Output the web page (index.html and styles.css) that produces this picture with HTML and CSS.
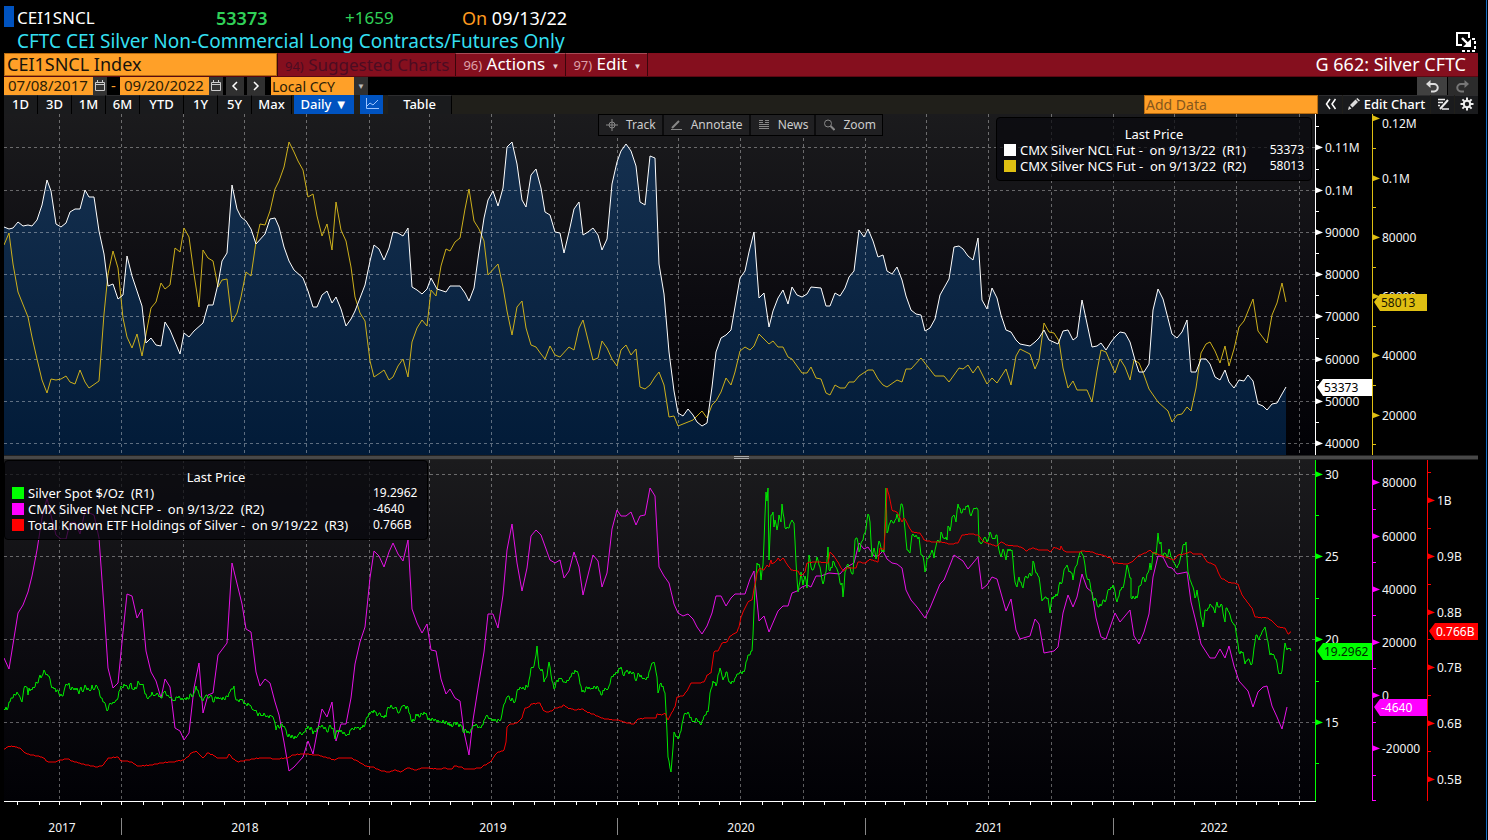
FILE: index.html
```html
<!DOCTYPE html>
<html lang="en">
<head>
<meta charset="utf-8">
<title>CEI1SNCL Index – G 662: Silver CFTC</title>
<link rel="stylesheet" href="styles.css">
</head>
<body>
<div class="terminal">
  <header class="quote">
    <div class="quote-row">
      <span class="ticker">CEI1SNCL</span>
      <span class="last">53373</span>
      <span class="change">+1659</span>
      <span class="as-of"><span class="as-of-label">On</span> 09/13/22</span>
    </div>
    <div class="quote-name">CFTC CEI Silver Non-Commercial Long Contracts/Futures Only</div>
    <button class="popout" aria-label="Pop out">
      <svg width="22" height="22" viewBox="0 0 22 22" fill="none" stroke="#fff" stroke-width="2">
        <path d="M7 14H2V2h12v5"/><path d="M7 7l7 7" stroke-width="2.4"/><path d="M16 8v8H8z" fill="#fff" stroke="none"/>
        <path d="M17 8h3v12H8v-3" stroke-dasharray="3 2"/>
      </svg>
    </button>
  </header>

  <nav class="command">
    <input class="command-input" aria-label="Security" value="CEI1SNCL Index">
    <button class="menu dim"><span class="num">94)</span> Suggested Charts</button>
    <button class="menu"><span class="num">96)</span> Actions <span class="caret">▼</span></button>
    <button class="menu"><span class="num">97)</span> Edit <span class="caret">▼</span></button>
    <h1 class="title">G 662: Silver CFTC</h1>
  </nav>

  <div class="range">
    <input class="date" aria-label="Start date" value="07/08/2017">
    <button class="cal" aria-label="Pick start date"><svg width="10" height="12" viewBox="0 0 10 12" fill="none" stroke="#ccc"><path d="M.5 2.500h9v8h-9zM.5 4.500h9M2.500 0v3M7.500 0v3"/></svg></button>
    <span class="dash">-</span>
    <input class="date" aria-label="End date" value="09/20/2022">
    <button class="cal" aria-label="Pick end date"><svg width="10" height="12" viewBox="0 0 10 12" fill="none" stroke="#ccc"><path d="M.5 2.500h9v8h-9zM.5 4.500h9M2.500 0v3M7.500 0v3"/></svg></button>
    <button class="step" aria-label="Earlier"><svg width="8" height="10" viewBox="0 0 8 10" fill="none" stroke="#fff" stroke-width="1.500"><path d="M6 1L2 5l4 4"/></svg></button>
    <button class="step" aria-label="Later"><svg width="8" height="10" viewBox="0 0 8 10" fill="none" stroke="#fff" stroke-width="1.500"><path d="M2 1l4 4-4 4"/></svg></button>
    <label class="currency">
      <select aria-label="Currency"><option>Local CCY</option></select>
      <span class="select-arrow">▼</span>
    </label>
    <div class="history">
      <button aria-label="Undo"><svg width="14" height="13" viewBox="0 0 14 13" fill="none" stroke="#ddd" stroke-width="2"><path d="M4 4h5a3.500 3.500 0 0 1 0 7.500H6"/><path d="M5.500 0v8L1 4z" fill="#ddd" stroke="none"/></svg></button>
      <button aria-label="Redo" disabled><svg width="14" height="13" viewBox="0 0 14 13" fill="none" stroke="#777" stroke-width="2"><path d="M10 4H5a3.500 3.500 0 0 0 0 7.500H8"/><path d="M8.500 0v8L13 4z" fill="#777" stroke="none"/></svg></button>
    </div>
  </div>

  <div class="tabs">
    <button class="w-s">1D</button><button class="w-s">3D</button><button class="w-s">1M</button><button class="w-s">6M</button><button class="w-l">YTD</button><button class="w-s">1Y</button><button class="w-s">5Y</button><button class="w-m">Max</button>
    <button class="active daily">Daily ▼</button>
    <button class="active line-type" aria-label="Line chart"><svg width="14" height="12" viewBox="0 0 14 12" fill="none" stroke="#9cc4ff"><path d="M1.500 0v10.500H14"/><path d="M2 8l3-3 3 2 5-5"/></svg></button>
    <button class="table-tab">Table</button>
    <div class="tabs-right">
      <input class="add-data" aria-label="Add Data" placeholder="Add Data">
      <button class="w-i" aria-label="Collapse"><svg width="12" height="12" viewBox="0 0 12 12" fill="none" stroke="#fff" stroke-width="1.500"><path d="M5 1L1.500 6 5 11M10.500 1L7 6l3.500 5"/></svg></button>
      <button class="edit-chart"><svg width="12" height="12" viewBox="0 0 12 12" fill="#ddd"><path d="M0 12l1-4 2.500 2.500zM2 7l5.500-5.500L10 4l-5.500 5.500zM8.200 1L9.400 0 12 2.500 10.800 3.500z"/></svg> Edit Chart</button>
      <button class="w-i" aria-label="Notes"><svg width="12" height="12" viewBox="0 0 12 12" fill="none" stroke="#eee"><path d="M1 1.500h7M1 4.500h5M1 7.500h2M5 11h7" stroke-width="1.500"/><path d="M3 11l8-9" stroke-width="2"/></svg></button>
      <button class="w-i" aria-label="Settings"><svg width="14" height="14" viewBox="0 0 14 14" fill="none" stroke="#eee"><circle cx="7" cy="7" r="3.200" stroke-width="2"/><path d="M7 .5v3M7 10.500v3M.5 7h3M10.500 7h3M2.400 2.400l2 2M9.600 9.600l2 2M11.600 2.400l-2 2M4.400 9.600l-2 2" stroke-width="2"/></svg></button>
    </div>
  </div>

  <main class="charts">
    <section class="panel">
      <svg id="positions" viewBox="4 114 1474 341" role="img" aria-label="Silver non-commercial long and short futures"></svg>
      <div class="tools">
        <button><svg width="12" height="12" viewBox="0 0 12 12" fill="none" stroke="#888"><circle cx="6" cy="6" r="3"/><path d="M6 0v12M0 6h12"/></svg>Track</button>
        <button><svg width="12" height="12" viewBox="0 0 12 12" fill="none" stroke="#888"><path d="M1 9l7-7" stroke-width="2"/><path d="M0 10.500h11"/></svg>Annotate</button>
        <button><svg width="12" height="12" viewBox="0 0 12 12" fill="none" stroke="#888"><path d="M1 1.500h4M1 3.500h4M7 1.500h4M7 3.500h4M1 5.500h10M1 7.500h10M1 9.500h10"/></svg>News</button>
        <button><svg width="12" height="12" viewBox="0 0 12 12" fill="none" stroke="#888"><circle cx="5" cy="4.500" r="3.500"/><path d="M7.500 7l4 4" stroke-width="2"/></svg>Zoom</button>
      </div>
      <div class="legend legend-top">
        <div class="legend-title">Last Price</div>
        <div class="legend-row"><i class="swatch white"></i><span class="legend-label">CMX Silver NCL Fut -&nbsp; on 9/13/22&nbsp; (R1)</span><span>53373</span></div>
        <div class="legend-row"><i class="swatch gold"></i><span class="legend-label">CMX Silver NCS Fut -&nbsp; on 9/13/22&nbsp; (R2)</span><span>58013</span></div>
      </div>
    </section>
    <div class="splitter"><span class="grip"></span></div>
    <section class="panel">
      <svg id="prices" viewBox="4 460 1474 380" role="img" aria-label="Silver spot, net futures position and ETF holdings"></svg>
      <div class="legend legend-bottom">
        <div class="legend-title">Last Price</div>
        <div class="legend-row"><i class="swatch green"></i><span class="legend-label">Silver Spot $/Oz&nbsp; (R1)</span><span class="legend-value">19.2962</span></div>
        <div class="legend-row"><i class="swatch magenta"></i><span class="legend-label">CMX Silver Net NCFP -&nbsp; on 9/13/22&nbsp; (R2)</span><span class="legend-value">-4640</span></div>
        <div class="legend-row"><i class="swatch red"></i><span class="legend-label">Total Known ETF Holdings of Silver -&nbsp; on 9/19/22&nbsp; (R3)</span><span class="legend-value">0.766B</span></div>
      </div>
    </section>
  </main>
</div>
<script src="chart.js"></script>
</body>
</html>
```

FILE: styles.css
```css
* { box-sizing: border-box; }
body {
  margin: 0;
  background: #000;
  color: #fff;
  font-family: "Noto Sans", "Open Sans", sans-serif;
  font-size: 13px;
}
button, input, select {
  font: inherit;
  color: inherit;
  border: 0;
  margin: 0;
  padding: 0;
  border-radius: 0;
  background: none;
}
button { white-space: nowrap; }
button svg { flex: none; }
.terminal {
  margin-right: 1px;
  padding: 6px 8px 0 4px;
  border-right: 1px solid #1a6fc4;
}

.quote {
  position: relative;
  height: 47px;
  font-size: 18px;
  line-height: 24px;
}
.quote-row {
  display: grid;
  grid-template-columns: 212px 129px 117px auto;
  height: 24px;
}
.ticker {
  height: 21px;
  padding-left: 3px;
  border-left: 10px solid #0053c0;
  font-size: 17px;
}
.last { color: #30d158; font-weight: 600; }
.change { color: #30d158; font-size: 17px; }
.as-of-label { color: #ff9a1f; }
.quote-name { padding-left: 13px; font-size: 19px; line-height: 22px; color: #34dff0; }
.popout { position: absolute; right: 1px; bottom: 0; display: flex; }

.command {
  display: flex;
  height: 24px;
  background: #850f1e;
  border-bottom: 1px solid #5a0812;
  font-size: 17px;
  line-height: 20px;
}
.command-input {
  width: 273px;
  padding: 0 2px 2px;
  border: 1px solid #b86c10;
  background: #ffa028;
  color: #17130c;
  font-size: 18px;
}
.menu {
  padding: 0 6px 0 7px;
  border-left: 1px solid #3a050b;
  border-top: 1px solid #a84a55;
}
.num { color: #dda0a8; font-size: 13px; }
.menu.dim, .dim .num { color: #4c0c22; border-top-color: #850f1e; }
.caret { margin-left: 2px; font-size: 8px; color: #e8cdd0; vertical-align: 1px; }
.title {
  flex: 1;
  margin: 0;
  padding-right: 12px;
  border-left: 1px solid #3a050b;
  font-size: 18px;
  font-weight: 400;
  line-height: 22px;
  text-align: right;
}

.range { display: flex; height: 18px; }
.date {
  width: 89px;
  padding: 0 0 2px 4px;
  background: #ffa028;
  color: #2a1c06;
  font-size: 15px;
}
.cal {
  display: flex;
  align-items: center;
  justify-content: center;
  width: 14px;
  background: #333;
}
.dash { width: 13px; text-align: center; color: #ffa028; font-size: 15px; line-height: 16px; }
.step {
  display: flex;
  align-items: center;
  justify-content: center;
  width: 18px;
  margin-left: 3px;
  background: #303030;
}
.currency { display: flex; margin-left: 6px; }
.currency select {
  width: 83px;
  appearance: none;
  padding: 0 0 2px 1px;
  background: #ffa028;
  color: #2a1c06;
  font-size: 14px;
}
.select-arrow { width: 14px; background: #303030; color: #bbb; font-size: 8px; line-height: 18px; text-align: center; }
.history { display: flex; gap: 1px; margin-left: auto; }
.history button {
  display: flex;
  align-items: center;
  justify-content: center;
  width: 30px;
  background: #404040;
}
.history button:disabled { background: #2c2c2c; }

.tabs {
  display: flex;
  height: 19px;
  background: #201f1a;
  line-height: 16px;
}
.tabs button {
  display: flex;
  align-items: center;
  justify-content: center;
  padding-bottom: 2px;
  background: #1a1b1d;
  border-right: 1px solid #000;
  border-top: 1px solid #2c2c2e;
  font-weight: 500;
}
.tabs .w-s { width: 34px; }
.tabs .w-m { width: 40px; }
.tabs .w-l { width: 44px; }
.tabs .active { background: #0053c0; border: 0; }
.tabs .daily { width: 60px; margin: 0 6px 0 2px; }
.tabs .line-type { width: 23px; margin-right: 5px; }
.tabs .table-tab { width: 64px; }
.tabs-right { display: flex; gap: 1px; margin-left: auto; }
.tabs-right button { gap: 4px; border-right: 0; }
.tabs .w-i { width: 23px; }
.tabs .edit-chart { width: 87px; }
.add-data {
  width: 174px;
  padding-left: 1px;
  border: 1px solid #b86c10;
  background: #ffa028;
  font-size: 14px;
}
.add-data::placeholder { color: #85561c; opacity: 1; }

.panel { position: relative; }
.panel > svg { display: block; width: 100%; height: auto; }
.panel text { font-size: 12px; fill: #f4f4f4; }
.splitter {
  display: flex;
  align-items: center;
  justify-content: center;
  height: 5px;
  background: #484848;
  border-top: 1px solid #222;
  border-bottom: 1px solid #222;
}
.grip { width: 15px; height: 3px; border-top: 1px solid #aaa; border-bottom: 1px solid #aaa; }
.tools {
  position: absolute;
  top: 0;
  left: 594px;
  display: flex;
  gap: 2px;
  height: 22px;
  border: 1px solid #000;
  background: #0c0c0d;
  font-size: 12px;
}
.tools button {
  display: flex;
  align-items: center;
  gap: 8px;
  padding: 0 6px 1px 7px;
  background: #202022;
  color: #ccc;
}
.legend {
  position: absolute;
  padding: 8px 7px;
  border: 1px solid #000;
  border-radius: 4px;
  background: rgba(9, 9, 14, 0.72);
  font-size: 13px;
  line-height: 16px;
}
.legend-top { top: 3px; right: 166px; width: 316px; height: 64px; }
.legend-bottom { top: 0; left: 0; width: 424px; height: 80px; }
.legend-title { text-align: center; }
.legend-row { display: flex; align-items: center; white-space: pre; }
.legend-label { flex: 1; }
.legend-value { width: 47px; }
.legend-row span:last-child { font-size: 12px; }
.swatch { width: 12px; height: 12px; margin-right: 4px; }
.white { background: #fff; }
.gold { background: #dfbf12; }
.green { background: #0f0; }
.magenta { background: #f0f; }
.red { background: #f00; }

.grid { stroke: #fff; stroke-opacity: 0.36; stroke-dasharray: 3 3; shape-rendering: crispEdges; }
.line { fill: none; stroke-width: 1; stroke-linejoin: round; }
```

FILE: chart.js
```js
const QUARTERS = [59, 121, 183, 244, 306, 369, 429, 491, 554, 617, 678, 740, 803, 865, 926, 988, 1051, 1113, 1174, 1236, 1299];
const MONTHS = [17, 39, 59, 80, 101, 121, 143, 162, 183, 202, 224, 244, 265, 287, 306, 328, 349, 369, 391, 410, 429, 450, 472, 491, 513, 534, 554, 576, 596, 617, 638, 657, 678, 699, 719, 740, 762, 782, 803, 824, 844, 865, 885, 904, 926, 947, 967, 988, 1009, 1030, 1051, 1071, 1092, 1113, 1133, 1152, 1174, 1194, 1215, 1236, 1256, 1278, 1299];

const LONGS = "4,227 9,229 13,228 18,222 23,226 28,225 32,226 37,220 42,205 47,180 51,191 56,224 61,227 66,223 70,212 75,209 80,209 85,190 89,197 94,197 99,231 104,254 108,286 113,284 118,299 123,295 127,256 132,276 142,306 146,343 151,338 156,345 161,346 165,322 170,330 180,354 184,333 189,337 194,331 203,323 208,305 213,305 218,284 222,261 227,253 232,185 237,209 241,217 246,221 251,229 256,244 265,234 270,219 275,218 279,227 284,247 289,261 294,270 303,278 308,291 313,307 317,307 322,295 327,291 332,303 336,297 341,309 346,326 351,319 355,311 365,285 370,261 374,245 379,249 384,260 389,248 393,232 398,233 403,236 408,228 412,287 417,290 422,294 427,289 431,278 437,289 446,292 450,286 460,286 465,293 469,301 474,288 479,251 484,218 488,200 493,191 498,206 503,188 507,147 512,142 517,164 522,200 526,207 531,175 536,169 541,188 545,212 550,215 555,232 560,233 564,253 569,232 574,209 579,202 583,235 588,232 593,228 598,235 602,250 607,239 612,184 617,162 621,151 626,144 631,151 636,166 640,202 645,205 650,156 655,158 659,264 664,294 669,352 674,391 678,413 683,416 688,409 693,415 697,422 702,426 707,423 712,387 716,352 721,338 726,335 731,330 736,301 740,278 745,271 749,252 754,232 759,298 764,293 769,327 773,311 778,298 783,290 788,304 792,287 797,295 802,297 807,294 811,287 821,288 826,306 830,306 835,293 840,296 845,288 849,277 854,271 859,230 864,237 868,229 873,241 878,257 883,255 887,271 892,274 897,267 902,280 906,296 911,310 916,314 921,315 925,331 930,328 935,319 940,295 949,279 954,247 959,246 963,249 968,256 973,260 978,238 982,300 987,309 992,288 997,298 1001,315 1006,330 1011,332 1016,340 1020,344 1030,346 1035,342 1039,338 1044,330 1049,340 1058,344 1063,331 1068,330 1073,340 1077,337 1082,300 1092,347 1097,346 1101,343 1106,350 1111,342 1115,337 1120,332 1125,333 1130,342 1135,360 1139,372 1144,372 1149,364 1153,310 1158,289 1163,299 1172,334 1177,338 1182,332 1187,320 1191,372 1196,372 1201,359 1206,359 1210,364 1215,377 1220,380 1225,370 1229,382 1234,388 1239,380 1244,381 1248,375 1253,381 1258,404 1263,406 1267,410 1272,404 1277,403 1282,394 1286,387";

const SHORTS = "4,245 9,233 13,264 18,292 28,317 32,337 37,359 42,380 47,393 51,379 56,380 61,379 66,376 70,382 75,384 80,370 85,382 89,388 99,381 104,314 108,274 113,251 118,268 123,318 127,337 132,348 137,334 142,356 147,329 151,308 156,302 161,283 165,289 170,285 175,248 180,252 184,228 189,237 194,274 199,307 203,250 208,258 213,261 218,287 222,280 227,279 232,322 237,313 241,297 246,272 251,276 256,242 260,224 265,225 270,211 275,189 279,181 284,167 289,142 294,152 298,161 303,170 308,197 313,194 317,216 322,236 327,224 332,250 336,202 341,230 346,241 351,267 355,297 360,313 365,321 370,361 374,377 380,373 384,370 389,380 393,377 398,366 403,359 408,377 412,342 417,328 422,320 427,326 431,290 436,296 441,266 446,249 450,251 455,242 460,238 465,209 469,189 474,221 479,229 484,241 488,275 498,264 503,287 507,311 512,335 517,307 522,301 526,328 531,345 536,347 541,354 545,359 550,346 555,355 560,357 569,347 574,350 579,328 583,320 593,360 598,358 602,341 607,348 612,359 617,366 621,350 626,345 631,355 636,349 640,387 645,389 650,385 655,377 659,372 664,385 669,417 674,416 678,426 693,420 702,411 707,418 712,405 716,401 721,392 726,378 731,385 735,372 740,351 745,347 750,350 754,346 759,334 769,344 773,341 778,347 783,347 788,357 792,359 802,373 807,373 811,367 816,378 821,379 826,393 830,395 835,385 840,388 845,388 849,382 854,382 859,376 868,370 873,370 878,379 883,385 887,387 897,380 902,382 906,369 911,369 921,358 935,376 944,376 949,382 959,368 963,369 968,365 973,373 978,366 987,384 992,378 997,383 1006,369 1011,385 1016,356 1020,349 1030,354 1035,369 1039,360 1044,323 1049,332 1054,333 1059,341 1063,368 1068,388 1073,381 1077,390 1087,390 1092,402 1097,371 1101,350 1106,352 1115,373 1120,359 1125,367 1130,380 1134,360 1139,363 1144,375 1149,389 1158,402 1168,411 1172,422 1177,415 1182,414 1187,407 1191,411 1196,388 1201,353 1206,344 1210,342 1215,351 1220,363 1225,346 1229,366 1234,349 1239,327 1244,321 1253,299 1258,331 1267,343 1272,315 1277,303 1282,283 1286,302";

const NET = "4,658 9,669 18,613 23,605 28,592 32,576 37,550 42,518 47,498 51,515 56,535 61,539 66,539 70,523 75,522 80,534 85,511 94,515 99,538 104,608 108,668 113,688 118,683 123,632 127,594 132,596 137,618 142,609 146,651 151,672 156,681 161,698 165,679 170,687 175,728 180,731 184,740 189,733 194,688 199,663 203,713 208,695 213,693 218,655 227,643 232,563 242,604 246,629 251,632 256,672 260,686 265,679 270,683 275,702 279,715 284,742 289,771 294,767 303,757 308,741 313,754 317,733 322,709 327,717 332,702 336,741 341,724 346,724 351,698 355,664 360,642 365,627 370,578 374,551 379,556 384,567 389,552 393,543 398,554 403,561 408,540 412,609 417,623 422,633 427,624 431,650 436,651 441,679 446,694 450,689 455,698 460,701 464,732 469,755 473,720 479,682 484,652 488,614 493,614 498,628 503,595 507,550 512,524 517,563 522,591 527,568 531,536 536,530 541,535 550,560 555,563 560,560 564,578 569,571 574,552 579,567 583,595 588,575 593,555 598,561 602,587 607,573 612,529 617,510 621,516 626,516 631,512 636,525 640,516 645,515 650,488 655,496 659,567 664,576 669,583 674,604 678,613 683,616 688,614 693,619 697,627 702,634 707,626 712,613 716,596 721,596 726,606 731,598 735,594 745,594 750,579 754,571 759,621 764,616 769,632 778,611 783,606 788,606 792,593 797,591 802,587 807,585 811,587 816,576 821,576 829,573 840,574 845,568 854,563 859,543 864,549 868,547 874,556 878,556 883,551 887,559 892,563 897,564 902,568 906,590 911,600 917,607 925,618 930,608 940,584 944,580 954,555 963,561 968,569 978,557 982,589 987,585 992,577 997,579 1006,611 1011,599 1016,630 1020,639 1030,636 1035,619 1039,624 1044,653 1054,651 1058,647 1063,613 1068,595 1073,607 1077,597 1082,574 1087,588 1092,592 1096,618 1101,637 1106,639 1115,613 1120,622 1130,610 1134,636 1139,644 1144,632 1149,614 1153,577 1158,556 1163,557 1168,567 1172,568 1177,574 1187,572 1191,602 1196,622 1201,644 1210,658 1215,658 1220,649 1225,658 1229,646 1234,666 1239,681 1248,691 1253,707 1258,692 1263,687 1267,686 1272,706 1277,717 1282,729 1287,707";

const SPOT = "3,710 6,707 7,710 9,702 17,692 19,695 22,702 24,688 27,687 28,695 29,688 32,690 35,687 36,682 38,683 40,675 42,676 44,670 46,675 49,676 51,685 53,687 56,692 57,690 59,694 63,696 65,687 69,683 70,689 72,687 78,691 79,694 81,687 83,692 85,685 87,690 91,690 92,685 94,690 96,685 99,690 100,696 102,698 103,702 104,702 106,707 108,710 109,705 112,704 115,702 117,700 119,691 122,687 126,685 128,689 131,683 132,689 136,689 138,681 140,685 143,684 145,694 147,698 149,697 152,692 154,696 157,693 161,698 164,692 167,696 171,697 173,701 175,701 177,697 179,696 181,700 184,699 188,699 191,694 193,696 196,686 197,690 200,697 203,701 206,695 209,698 211,695 213,702 216,697 220,698 224,699 227,696 230,692 232,689 234,686 235,696 237,700 242,699 244,704 250,705 253,710 256,710 258,716 260,713 262,715 267,716 272,716 274,720 276,730 277,726 279,728 282,724 285,728 287,735 293,737 297,737 299,734 303,733 306,728 312,729 313,734 317,728 321,727 325,727 328,732 329,727 333,728 335,739 337,730 342,732 347,735 351,730 357,728 364,727 367,717 371,712 376,712 377,716 379,713 382,717 386,717 387,710 391,705 393,709 395,708 399,713 401,708 404,705 406,709 408,707 411,720 414,721 416,714 419,717 422,714 426,713 428,720 435,719 440,722 447,722 452,727 454,722 462,726 463,732 466,730 469,733 473,726 476,724 479,727 483,725 486,716 490,718 496,721 501,719 503,708 506,699 508,696 510,700 512,698 515,702 518,689 523,687 525,690 526,685 528,687 531,668 534,666 537,646 539,668 543,672 544,682 547,676 549,662 551,675 554,689 557,680 561,678 564,682 569,680 573,673 577,671 579,677 582,692 584,692 587,687 591,689 598,687 601,695 603,690 608,689 612,676 617,673 621,667 623,675 626,672 634,673 636,681 638,673 643,679 648,678 651,666 654,662 657,677 658,693 661,683 665,693 667,732 668,757 671,772 673,748 674,732 678,739 681,731 684,715 688,712 693,722 697,719 701,725 704,716 708,712 710,693 713,681 716,686 720,668 723,680 727,672 729,682 733,682 736,677 740,672 744,672 746,662 749,655 752,651 753,635 755,588 757,563 760,568 761,580 763,565 765,515 766,492 767,501 768,488 769,560 771,515 773,512 774,527 775,520 777,530 779,515 781,522 782,504 785,528 787,527 789,528 791,522 794,523 796,562 798,592 801,572 803,585 805,576 807,588 809,555 812,570 814,568 817,557 820,567 823,584 826,572 828,547 829,570 832,568 833,561 836,567 838,572 840,583 842,583 843,597 845,572 848,564 852,574 853,574 855,540 857,538 859,552 862,541 865,533 868,514 870,522 872,557 874,548 876,559 879,541 882,552 884,552 886,488 887,533 889,525 891,520 894,523 897,514 899,522 901,504 903,508 905,529 907,550 910,553 912,535 915,537 919,537 921,555 923,556 925,572 927,559 930,555 932,550 934,558 937,541 940,542 941,532 944,538 947,540 948,526 950,531 952,517 954,515 956,522 958,504 961,513 964,509 968,505 971,516 973,510 976,508 978,510 979,542 982,543 984,538 988,540 990,532 993,539 997,535 999,550 1001,557 1003,549 1006,560 1008,549 1012,550 1015,582 1017,587 1019,577 1023,588 1025,577 1028,578 1030,573 1032,575 1033,561 1036,573 1039,577 1042,601 1045,597 1048,598 1050,613 1052,597 1057,596 1060,582 1062,583 1064,570 1067,565 1069,572 1072,573 1073,580 1075,568 1077,565 1080,552 1083,555 1085,565 1087,578 1090,583 1093,600 1096,599 1098,607 1101,606 1103,600 1106,600 1108,590 1112,588 1113,585 1115,592 1117,602 1120,590 1123,588 1125,578 1127,565 1129,573 1131,578 1131,598 1137,598 1139,586 1141,585 1143,577 1145,582 1148,573 1150,563 1151,570 1153,552 1156,555 1158,533 1159,542 1161,542 1162,555 1165,553 1167,558 1169,549 1172,558 1174,563 1177,568 1180,560 1183,545 1186,542 1188,572 1191,582 1193,587 1195,598 1197,590 1199,602 1201,617 1203,627 1205,610 1208,608 1211,605 1213,607 1215,613 1217,602 1219,607 1222,605 1224,618 1225,622 1226,608 1229,612 1232,622 1235,625 1237,638 1239,652 1243,652 1245,664 1248,659 1252,664 1253,657 1256,635 1259,640 1262,632 1263,630 1265,627 1268,642 1270,655 1273,654 1277,663 1279,674 1282,671 1284,652 1285,643 1287,650 1288,648 1290,648 1291,651";

const ETF = "3,750 7,747 12,746 15,747 20,748 25,753 32,755 42,757 48,762 55,762 60,760 68,759 75,762 82,764 87,765 97,767 102,766 108,758 118,757 121,761 127,761 133,763 138,766 152,765 160,763 172,762 183,760 188,757 191,753 196,751 200,755 203,758 207,753 213,755 218,758 227,758 229,754 233,759 238,762 247,760 260,758 268,758 275,759 287,758 293,755 303,754 317,755 325,757 334,760 338,758 350,758 358,761 365,766 373,767 382,771 388,772 395,770 400,772 408,768 415,770 423,768 442,769 443,768 452,769 454,766 462,767 465,769 475,769 482,767 490,762 498,752 504,750 506,742 507,727 510,724 517,723 522,718 525,708 529,707 531,704 540,703 543,710 547,712 552,711 555,708 562,707 563,705 568,708 575,710 582,709 587,712 593,714 602,718 605,719 618,720 627,723 634,724 638,719 647,718 656,718 657,714 662,715 665,713 668,720 672,712 675,707 677,697 683,696 687,691 691,683 697,683 704,682 707,675 711,673 714,652 718,651 722,643 727,642 730,636 737,632 739,627 741,617 745,608 748,602 752,600 754,589 757,573 760,568 764,570 767,565 769,567 771,560 772,564 776,561 778,558 780,561 783,558 787,564 791,570 798,571 801,576 805,572 807,563 812,562 820,562 828,563 830,552 833,555 838,562 843,571 847,568 856,568 858,562 865,563 870,559 878,562 880,548 884,550 886,515 887,488 889,495 892,510 897,512 900,518 902,522 904,518 907,523 912,532 920,533 924,540 932,542 942,542 950,544 958,543 962,535 972,534 978,535 983,541 989,544 997,546 1001,542 1007,545 1017,546 1023,548 1026,551 1032,548 1040,550 1048,550 1050,552 1054,547 1060,550 1061,546 1063,550 1067,552 1077,552 1083,551 1092,552 1097,554 1102,555 1107,557 1111,558 1113,563 1128,564 1133,561 1138,556 1145,553 1150,550 1153,553 1163,556 1174,560 1178,555 1185,554 1190,552 1193,554 1202,554 1207,562 1215,565 1221,578 1228,582 1238,584 1242,595 1247,602 1252,608 1255,617 1268,618 1274,623 1278,627 1285,628 1288,634 1291,632";

const vline = (x, y1, y2, attrs) => `<path d="M${x + 0.5} ${y1}V${y2}" ${attrs}/>`;
const hline = (y, x1, x2, attrs) => `<path d="M${x1} ${y + 0.5}H${x2}" ${attrs}/>`;
const series = (points, color) => `<polyline class="line" points="${points}" stroke="${color}"/>`;

// Daily closes wobble a little between the listed turning points.
function daily(points, size) {
  const list = points.split(" ").map(p => p.split(",").map(Number));
  const out = [];
  list.forEach(([x, y], i) => {
    out.push([x, y]);
    const next = list[i + 1];
    if (!next) return;
    for (let px = x + 1; px < next[0]; px++) {
      const t = (px - x) / (next[0] - x);
      const wobble = ((px * 37) % 11 - 5) / 5 * size;
      out.push([px, Math.round(y + (next[1] - y) * t + wobble)]);
    }
  });
  return out.map(p => p.join(",")).join(" ");
}

function grid(top, bottom, rows) {
  return QUARTERS.map(x => vline(x, top, bottom, 'class="grid"')).join("") +
    rows.map(y => hline(y, 4, 1315, 'class="grid"')).join("");
}

function axis({ x, top, bottom, color, major, minor }) {
  let out = vline(x, top, bottom, `stroke="${color}"`);
  for (const [y, label, labelY = y] of major) {
    out += `<path d="M${x} ${y - 3}l8 3.500-8 3z" fill="${color}"/>`;
    out += `<text x="${x + 10}" y="${labelY + 5}">${label}</text>`;
  }
  for (const y of minor) out += hline(y, x, x + 4, `stroke="${color}"`);
  return out;
}

function flag(x, right, y, color, label, ink) {
  return `<path d="M${x + 2} ${y}l6-8H${right}V${y + 9}H${x + 8}z" fill="${color}"/>` +
    `<text x="${x + 9}" y="${y + 5}" style="fill:${ink}">${label}</text>`;
}

function backdrop(id, top, height) {
  return `<defs><linearGradient id="${id}" x2="0" y2="1"><stop offset="0" stop-color="#1b1b1d"/><stop offset=".55" stop-color="#0c0b10"/><stop offset="1" stop-color="#010105"/></linearGradient></defs>
    <rect x="4" y="${top}" width="1311" height="${height}" fill="url(#${id})"/>`;
}

const areaFill = `<defs><linearGradient id="area" gradientUnits="userSpaceOnUse" x1="0" y1="142" x2="0" y2="455"><stop offset="0" stop-color="#15304f"/><stop offset="1" stop-color="#021b38"/></linearGradient></defs>`;

document.getElementById("positions").innerHTML =
  backdrop("back-top", 114, 341) + areaFill +
  `<polygon points="4,455 ${LONGS} 1286,455" fill="url(#area)"/>` +
  grid(114, 455, [147, 190, 232, 274, 316, 359, 401, 443]) +
  series(SHORTS, "#cdb01c") + series(LONGS, "#fff") +
  axis({ x: 1315, top: 114, bottom: 455, color: "#fff",
    major: [[147, "0.11M"], [190, "0.1M"], [232, "90000"], [274, "80000"], [316, "70000"], [359, "60000"], [401, "50000"], [443, "40000"]],
    minor: [126, 169, 211, 253, 295, 338, 380, 422] }) +
  axis({ x: 1372, top: 114, bottom: 455, color: "#dfbf12",
    major: [[118, "0.12M", 123], [178, "0.1M"], [237, "80000"], [296, "60000"], [355, "40000"], [415, "20000"]],
    minor: [148, 207, 267, 326, 385, 444] }) +
  flag(1315, 1372, 387, "#fff", "53373", "#000") +
  flag(1372, 1427, 302, "#dfbf12", "58013", "#1c1800");

const years = [[62, 2017], [245, 2018], [493, 2019], [741, 2020], [989, 2021], [1214, 2022]];
document.getElementById("prices").innerHTML =
  backdrop("back-bottom", 460, 341) +
  grid(460, 801, [474, 556, 639, 722]) +
  series(NET, "#e612e6") +
  series(daily(SPOT, 2), "#00e800") +
  series(daily(ETF, 0.3), "#f00000") +
  hline(801, 4, 1316, 'stroke="#fff"') +
  MONTHS.map(x => vline(x, 802, 805, 'stroke="#fff"')).join("") +
  [121, 369, 617, 865, 1113].map(x => vline(x, 818, 835, 'stroke="#888"')).join("") +
  years.map(([x, y]) => `<text x="${x}" y="832" text-anchor="middle">${y}</text>`).join("") +
  axis({ x: 1315, top: 460, bottom: 801, color: "#0f0",
    major: [[474, "30"], [556, "25"], [639, "20"], [722, "15"]],
    minor: [515, 598, 681, 763] }) +
  axis({ x: 1372, top: 460, bottom: 801, color: "#f0f",
    major: [[482, "80000"], [536, "60000"], [589, "40000"], [642, "20000"], [695, "0"], [748, "-20000"]],
    minor: [509, 562, 615, 668, 722, 775, 800] }) +
  axis({ x: 1427, top: 460, bottom: 801, color: "#f00",
    major: [[500, "1B"], [556, "0.9B"], [612, "0.8B"], [667, "0.7B"], [723, "0.6B"], [779, "0.5B"]],
    minor: [472, 528, 584, 639, 695, 751] }) +
  flag(1315, 1372, 651, "#0f0", "19.2962", "#002a00") +
  flag(1372, 1427, 707, "#f0f", "-4640", "#fff") +
  flag(1427, 1478, 631, "#f00", "0.766B", "#fff");
```
